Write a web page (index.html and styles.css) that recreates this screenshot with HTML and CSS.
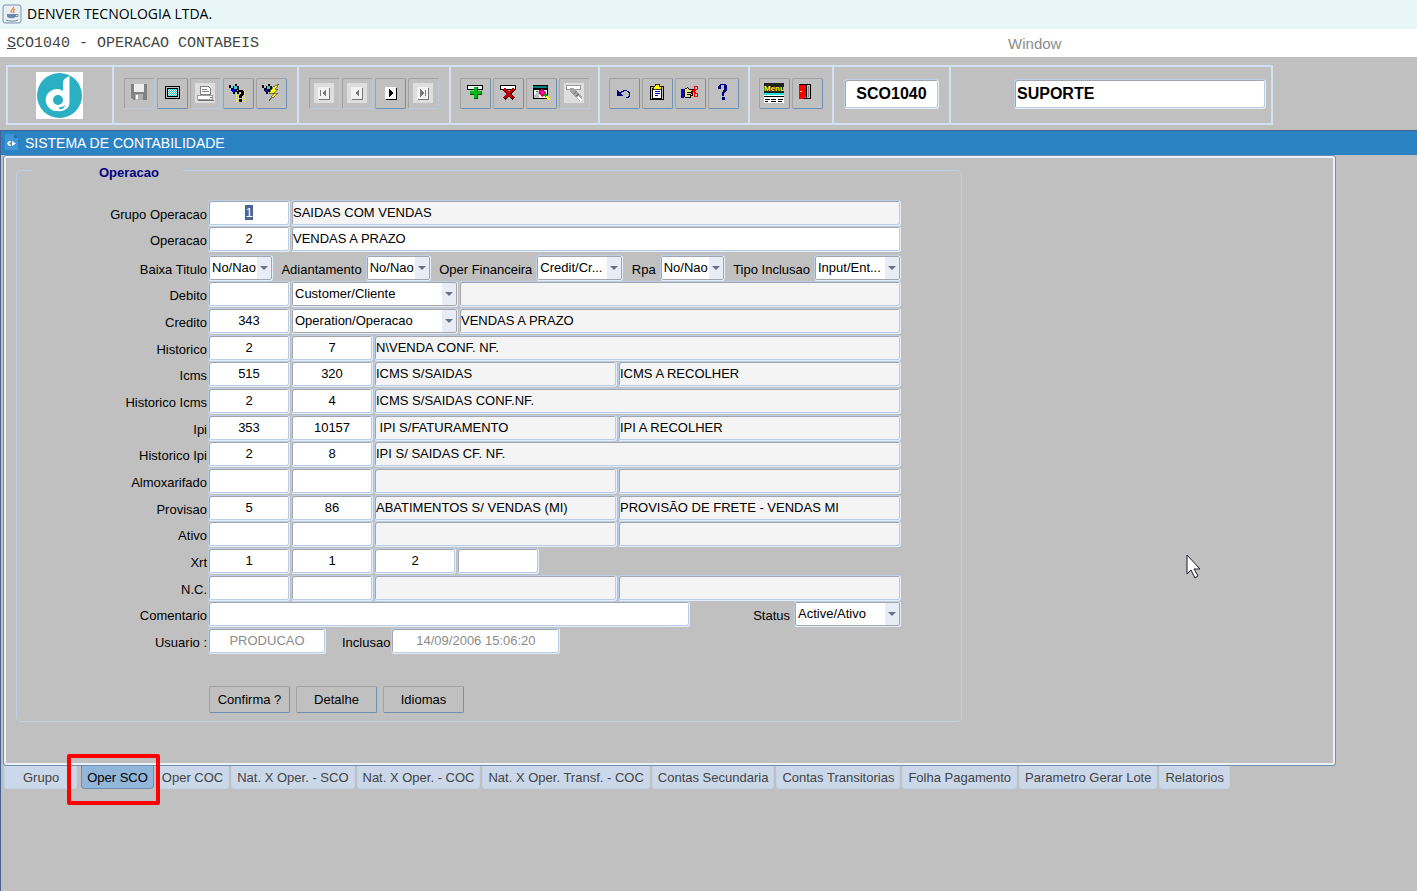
FILE: index.html
```html
<!DOCTYPE html>
<html lang="pt-BR">
<head>
    <meta charset="UTF-8">
    <meta name="viewport" content="width=device-width, initial-scale=1.0">
    <title>DENVER TECNOLOGIA LTDA.</title>
    <link rel="stylesheet" href="styles.css">
</head>
<body>
    <header class="titlebar">
        <svg class="java-icon" width="20" height="20" viewBox="0 0 20 20">
            <rect x="1" y="1" width="18" height="18" rx="2" fill="#e9eef2" stroke="#7d93a8"/>
            <path d="M11 3c2 2-4 3-1 6M13 5c-2 1-2 2-1 4" fill="none" stroke="#e8883a" stroke-width="1.3"/>
            <path d="M5 10h9v2c0 3-9 3-9 0z" fill="#6c8bab"/>
            <path d="M14 10.500h2v2h-3M4 16c3 1.500 9 1.500 12 0" fill="none" stroke="#6c8bab"/>
        </svg>
        <span>DENVER TECNOLOGIA LTDA.</span>
    </header>
    <nav class="menubar">
        <button type="button" class="menu-main"><u>S</u>CO1040 - OPERACAO CONTABEIS</button>
        <button type="button" class="menu-window" disabled>Window</button>
    </nav>

    <div class="toolbar-area">
        <div class="toolbar">
            <div class="group">
                <svg width="47" height="47" viewBox="0 0 47 47">
                    <rect width="47" height="47" fill="#fff"/>
                    <circle cx="23.500" cy="23.500" r="22.500" fill="#2bafc3"/>
                    <path d="M27 10q0-3 6.500-6v26q0 6-5 8-4 2-7 1a11 11 0 1 1 5.500-20z" fill="#fff"/>
                    <circle cx="22" cy="28" r="5" fill="#2bafc3"/>
                    <path d="M20 34q5 3 9-1-1 5-6 4 2-1-3-3z" fill="#2bafc3"/>
                </svg>
            </div>
            <div class="group">
                <button type="button" class="tool" disabled aria-label="Salvar">
                    <svg viewBox="0 0 20 20"><path d="M2 1h16v16H4l-2-2z" fill="#828282"/><path d="M5 1h10v8H5z" fill="#ededed"/><path d="M6 11h8v6H6z" fill="#b0b0b0"/><path d="M7 12h2v4H7z" fill="#fff"/></svg>
                </button>
                <button type="button" class="tool" aria-label="Tela">
                    <svg viewBox="0 0 20 20"><rect x="3.500" y="3.500" width="14" height="12" rx="1" fill="#c0c0c0" stroke="#000"/><rect x="5.500" y="5.500" width="10" height="8" fill="#fff" stroke="#000"/><path d="M6 6.500h9M6 8.500h9M6 10.500h9M6 12.500h9" stroke="#30c8c8" stroke-dasharray="1 1"/><path d="M7 7.500h8M7 9.500h8M7 11.500h8" stroke="#30c8c8" stroke-dasharray="1 1"/></svg>
                </button>
                <button type="button" class="tool" disabled aria-label="Imprimir">
                    <svg viewBox="0 0 20 20"><path d="M0 0h20v20H0z" fill="#dedede"/><path d="M5.500 3.500h8l2 2v6h-10z" fill="#fff" stroke="#808080"/><path d="M7 6.500h5M7 8.500h7" stroke="#808080"/><path d="M2.500 12.500h15v4h-15z" fill="#fff" stroke="#a0a0a0"/><path d="M3 17.500h16M15 14.500h2" stroke="#707070"/></svg>
                </button>
                <button type="button" class="tool" aria-label="Consulta">
                    <svg viewBox="0 0 20 20"><path d="M8 8.500h10M8 10.500h10M8 12.500h10M8 14.500h10M8 16.500h10M8 18.500h10" stroke="#ffff60" stroke-dasharray="1 1"/><path d="M1 2h2v1h4V1h2v2h2v4H9v2H7v2H5V8H3V5H1z" fill="#000"/><path d="M6 3h3v3H6z" fill="#20d8e8"/><path d="M4 6h3v3H4z" fill="#0000e0"/><path d="M3 3h2v2H3z" fill="#c0c0c0"/><path d="M9 8h1V7h5v1h1v4h-1v1h-1v2h-3v-3h1v-1h1V9h-2v2H9zM11 16h3v3h-3z" fill="#000"/></svg>
                </button>
                <button type="button" class="tool" aria-label="Executar consulta">
                    <svg viewBox="0 0 20 20"><path d="M1 2h2v1h4V1h2v2h2v4H9v2H7v2H5V8H3V5H1z" fill="#000"/><path d="M6 3h3v3H6z" fill="#20d8e8"/><path d="M4 6h3v3H4z" fill="#0000e0"/><path d="M3 3h2v2H3z" fill="#c0c0c0"/><path d="M18 1l-6 3-4 6h5l-5 8 9-8h-4l4-4h-3z" fill="#ff0" stroke="#444" stroke-width=".7"/></svg>
                </button>
            </div>
            <div class="group">
                <button type="button" class="tool" disabled aria-label="Primeiro">
                    <svg viewBox="0 0 20 20"><path d="M0 0h20v20H0z" fill="#dedede"/><path d="M4 4h11v12H4z" fill="#f2f2f2"/><path d="M15.500 5v11.500H5" fill="none" stroke="#777"/><path d="M6 7h1v6H6zM12 6v8l-4-4z" fill="#777"/></svg>
                </button>
                <button type="button" class="tool" disabled aria-label="Anterior">
                    <svg viewBox="0 0 20 20"><path d="M0 0h20v20H0z" fill="#dedede"/><path d="M4 4h11v12H4z" fill="#f2f2f2"/><path d="M15.500 5v11.500H5" fill="none" stroke="#777"/><path d="M12 6v8l-4-4z" fill="#777"/></svg>
                </button>
                <button type="button" class="tool" aria-label="Proximo">
                    <svg viewBox="0 0 20 20"><path d="M5 4h11v12H5z" fill="#f8f8f8"/><path d="M16.500 5v11.500H6" fill="none" stroke="#000"/><path d="M9 6v8l4-4z" fill="#000"/></svg>
                </button>
                <button type="button" class="tool" disabled aria-label="Ultimo">
                    <svg viewBox="0 0 20 20"><path d="M0 0h20v20H0z" fill="#dedede"/><path d="M4 4h11v12H4z" fill="#f2f2f2"/><path d="M15.500 5v11.500H5" fill="none" stroke="#777"/><path d="M12 7h1v6h-1zM7 6v8l4-4z" fill="#777"/></svg>
                </button>
            </div>
            <div class="group">
                <button type="button" class="tool" aria-label="Inserir">
                    <svg viewBox="0 0 20 20"><path d="M2.500 2.500h15v4h-15z" fill="#fff" stroke="#000"/><path d="M9 4h4v4h4v4h-4v4H9v-4H5V8h4z" fill="#005000"/><path d="M9 4h3v4h4v3h-4v4H9v-4H5V8h4z" fill="#00b818"/></svg>
                </button>
                <button type="button" class="tool" aria-label="Excluir">
                    <svg viewBox="0 0 20 20"><path d="M2.500 2.500h15v4h-15z" fill="#fff" stroke="#000"/><path d="M6 6l10 10M16 6L6 16" stroke="#600000" stroke-width="3.500"/><path d="M6 6l9 9M15 6l-9 9" stroke="#c80000" stroke-width="2.500"/></svg>
                </button>
                <button type="button" class="tool" aria-label="Limpar bloco">
                    <svg viewBox="0 0 20 20"><path d="M2.500 2.500h14v3h-14zM2.500 6.500h14v9h-14z" fill="#fff" stroke="#000"/><path d="M2 3h14v2H2zM5 8h8v1H5z" fill="#008080"/><path d="M3 12l5-4v7H3z" fill="#c0c0c0"/><path d="M8 7l3-1 4 4-3 4-4-3z" fill="#e00040"/><path d="M10 8h3v3h-3z" fill="#f0f"/><path d="M12 12l2-2 3 2-2 3z" fill="#00a020"/><path d="M14 14l2-2 3 4-1 2z" fill="#ff0"/></svg>
                </button>
                <button type="button" class="tool" disabled aria-label="Limpar registro">
                    <svg viewBox="0 0 20 20"><path d="M0 0h20v20H0z" fill="#dedede"/><path d="M2.500 2.500h14v4h-14z" fill="#fff" stroke="#999"/><path d="M6 5h4l8 9v4h-2L6 9z" fill="#a4a4a4"/><path d="M10 11l3-3M12 13l3-2" stroke="#777"/><path d="M14 14l4 4" stroke="#fff" stroke-width="2"/></svg>
                </button>
            </div>
            <div class="group">
                <button type="button" class="tool" aria-label="Desfazer">
                    <svg viewBox="0 0 20 20"><path d="M3 7v6h6v-1H8v-1H7v-1h1V9h2V8h3v1h1v1h1v3h-1v1h-2v1h3v-1h1V9h-1V8h-2V7H9v1H7v1H5V8H4V7z" fill="#000080"/></svg>
                </button>
                <button type="button" class="tool" aria-label="Lista">
                    <svg viewBox="0 0 20 20"><rect x="3.500" y="3.500" width="13" height="13" rx="1" fill="#c0c0c0" stroke="#000"/><path d="M5.500 5.500h9v10h-9z" fill="#fff" stroke="#000"/><path d="M8 1h4v2h2v3H6V3h2z" fill="#ff0" stroke="#000" stroke-width=".8"/><path d="M8 8.500h5M8 10.500h5M8 12.500h3" stroke="#0000c0"/></svg>
                </button>
                <button type="button" class="tool" aria-label="Editar">
                    <svg viewBox="0 0 20 20"><path d="M1 6h3v9H1z" fill="#0000e0"/><path d="M4.500 6.500l3-2 2 2h5v2h-3v2h1v2h-2v2h-5l-1-1z" fill="#e8e080" stroke="#000"/><path d="M7 9h4M7 11h4" stroke="#000"/><circle cx="16" cy="5" r="2" fill="none" stroke="#f00"/><circle cx="16" cy="12" r="2" fill="none" stroke="#f00"/><path d="M12 7l4 3M12 10l4-3" stroke="#f00"/></svg>
                </button>
                <button type="button" class="tool" aria-label="Ajuda">
                    <svg viewBox="0 0 20 20"><path d="M5 6V3l2-2h5l2 2v4l-3 3v3H9v-3l2-4V2H8v4z" fill="#000080"/><path d="M9 14h3v3H9z" fill="#000080"/></svg>
                </button>
            </div>
            <div class="group">
                <button type="button" class="tool" aria-label="Menu">
                    <svg viewBox="0 0 20 20"><path d="M0 0h20v10H0z" fill="#222"/><text x="0" y="8" class="menu-glyph">Menu</text><path d="M0 10h20v2H0z" fill="#20e0e0"/><path d="M0 12h20v8H0z" fill="#fff"/><path d="M0 13.500h20M1 16.500h5M7 16.500h5M14 16.500h5M1 18.500h3M7 18.500h5M14 18.500h4" stroke="#000"/></svg>
                </button>
                <button type="button" class="tool" aria-label="Sair">
                    <svg viewBox="0 0 20 20"><path d="M2.500 1.500h11v14h-11z" fill="#c0c0c0" stroke="#000"/><path d="M2 2h7v12l-4 2H2z" fill="#f00"/><path d="M9.500 2v13" stroke="#000"/><path d="M11.500 3v11" stroke="#888"/><path d="M3 8h2v1H3z" fill="#ff0"/></svg>
                </button>
            </div>
            <div class="group">
                <input class="field tool-code" aria-label="Programa" value="SCO1040">
            </div>
            <div class="group group-user">
                <input class="field tool-user" aria-label="Usuario" value="SUPORTE">
            </div>
        </div>
    </div>

    <main class="window">
        <div class="window-title">
            <svg width="14" height="16" viewBox="0 0 14 16">
                <path d="M0 0h9l4 4v12H0z" fill="#3f96d6"/>
                <path d="M9 0v4h4z" fill="#1f6cab"/>
                <path d="M6 7H4L2 9.500 4 12h2v-1.500H4.500v-2H6zM7 7v5l4-2.500z" fill="#fff"/>
            </svg>
            <h1>SISTEMA DE CONTABILIDADE</h1>
        </div>

        <form class="panel">
            <fieldset>
                <legend>Operacao</legend>
                <div class="rows">
                    <div class="row">
                        <label for="grupo">Grupo Operacao</label>
                        <input id="grupo" class="field code" value="1">
                        <input class="field desc" aria-label="Descricao do grupo" value="SAIDAS COM VENDAS" readonly>
                    </div>
                    <div class="row">
                        <label for="operacao">Operacao</label>
                        <input id="operacao" class="field code" value="2">
                        <input class="field text" aria-label="Descricao da operacao" value="VENDAS A PRAZO">
                    </div>
                    <div class="row">
                        <label for="baixa">Baixa Titulo</label>
                        <div class="flags">
                            <select id="baixa" class="field short"><option>No/Nao</option></select>
                            <div class="pair">
                                <label for="adiant">Adiantamento</label>
                                <select id="adiant" class="field short"><option>No/Nao</option></select>
                            </div>
                            <div class="pair">
                                <label for="financ">Oper Financeira</label>
                                <select id="financ" class="field medium"><option>Credit/Cr...</option></select>
                            </div>
                            <div class="pair">
                                <label for="rpa">Rpa</label>
                                <select id="rpa" class="field short"><option>No/Nao</option></select>
                            </div>
                            <div class="pair">
                                <label for="tipo">Tipo Inclusao</label>
                                <select id="tipo" class="field medium"><option>Input/Ent...</option></select>
                            </div>
                        </div>
                    </div>
                    <div class="row">
                        <label for="debito">Debito</label>
                        <input id="debito" class="field code">
                        <select class="field account" aria-label="Tipo debito"><option>Customer/Cliente</option></select>
                        <input class="field desc" aria-label="Conta debito" readonly>
                    </div>
                    <div class="row">
                        <label for="credito">Credito</label>
                        <input id="credito" class="field code" value="343">
                        <select class="field account" aria-label="Tipo credito"><option>Operation/Operacao</option></select>
                        <input class="field desc" aria-label="Conta credito" value="VENDAS A PRAZO" readonly>
                    </div>
                    <div class="row">
                        <label for="historico">Historico</label>
                        <input id="historico" class="field code" value="2">
                        <input class="field code" aria-label="Historico 2" value="7">
                        <input class="field desc" aria-label="Descricao historico" value="N\VENDA CONF. NF." readonly>
                    </div>
                    <div class="row">
                        <label for="icms">Icms</label>
                        <input id="icms" class="field code" value="515">
                        <input class="field code" aria-label="Icms 2" value="320">
                        <input class="field desc half" aria-label="Conta icms" value="ICMS S/SAIDAS" readonly>
                        <input class="field desc" aria-label="Contrapartida icms" value="ICMS A RECOLHER" readonly>
                    </div>
                    <div class="row">
                        <label for="hist-icms">Historico Icms</label>
                        <input id="hist-icms" class="field code" value="2">
                        <input class="field code" aria-label="Historico icms 2" value="4">
                        <input class="field desc" aria-label="Descricao historico icms" value="ICMS S/SAIDAS CONF.NF." readonly>
                    </div>
                    <div class="row">
                        <label for="ipi">Ipi</label>
                        <input id="ipi" class="field code" value="353">
                        <input class="field code" aria-label="Ipi 2" value="10157">
                        <input class="field desc half" aria-label="Conta ipi" value=" IPI S/FATURAMENTO" readonly>
                        <input class="field desc" aria-label="Contrapartida ipi" value="IPI A RECOLHER" readonly>
                    </div>
                    <div class="row">
                        <label for="hist-ipi">Historico Ipi</label>
                        <input id="hist-ipi" class="field code" value="2">
                        <input class="field code" aria-label="Historico ipi 2" value="8">
                        <input class="field desc" aria-label="Descricao historico ipi" value="IPI S/ SAIDAS CF. NF." readonly>
                    </div>
                    <div class="row">
                        <label for="almox">Almoxarifado</label>
                        <input id="almox" class="field code">
                        <input class="field code" aria-label="Almoxarifado 2">
                        <input class="field desc half" aria-label="Conta almoxarifado" readonly>
                        <input class="field desc" aria-label="Contrapartida almoxarifado" readonly>
                    </div>
                    <div class="row">
                        <label for="provisao">Provisao</label>
                        <input id="provisao" class="field code" value="5">
                        <input class="field code" aria-label="Provisao 2" value="86">
                        <input class="field desc half" aria-label="Conta provisao" value="ABATIMENTOS S/ VENDAS (MI)" readonly>
                        <input class="field desc" aria-label="Contrapartida provisao" value="PROVISÃO DE FRETE - VENDAS MI" readonly>
                    </div>
                    <div class="row">
                        <label for="ativo">Ativo</label>
                        <input id="ativo" class="field code">
                        <input class="field code" aria-label="Ativo 2">
                        <input class="field desc half" aria-label="Conta ativo" readonly>
                        <input class="field desc" aria-label="Contrapartida ativo" readonly>
                    </div>
                    <div class="row">
                        <label for="xrt">Xrt</label>
                        <input id="xrt" class="field code" value="1">
                        <input class="field code" aria-label="Xrt 2" value="1">
                        <input class="field code" aria-label="Xrt 3" value="2">
                        <input class="field code" aria-label="Xrt 4">
                    </div>
                    <div class="row">
                        <label for="nc">N.C.</label>
                        <input id="nc" class="field code">
                        <input class="field code" aria-label="N.C. 2">
                        <input class="field desc half" aria-label="Conta N.C." readonly>
                        <input class="field desc" aria-label="Contrapartida N.C." readonly>
                    </div>
                    <div class="row">
                        <label for="comentario">Comentario</label>
                        <input id="comentario" class="field text">
                        <div class="pair status">
                            <label for="status">Status</label>
                            <select id="status" class="field"><option>Active/Ativo</option></select>
                        </div>
                    </div>
                    <div class="row">
                        <label for="usuario">Usuario :</label>
                        <input id="usuario" class="field user" value="PRODUCAO" disabled>
                        <label for="inclusao" class="inclusao">Inclusao</label>
                        <input id="inclusao" class="field date" value="14/09/2006 15:06:20" disabled>
                    </div>
                </div>
                <div class="actions">
                    <button type="button">Confirma ?</button>
                    <button type="button">Detalhe</button>
                    <button type="button">Idiomas</button>
                </div>
            </fieldset>
        </form>

        <nav class="tabs">
            <button type="button" class="tab wide">Grupo</button>
            <button type="button" class="tab active">Oper SCO<span class="highlight"></span></button>
            <button type="button" class="tab">Oper COC</button>
            <button type="button" class="tab">Nat. X Oper. - SCO</button>
            <button type="button" class="tab">Nat. X Oper. - COC</button>
            <button type="button" class="tab">Nat. X Oper. Transf. - COC</button>
            <button type="button" class="tab">Contas Secundaria</button>
            <button type="button" class="tab">Contas Transitorias</button>
            <button type="button" class="tab">Folha Pagamento</button>
            <button type="button" class="tab">Parametro Gerar Lote</button>
            <button type="button" class="tab">Relatorios</button>
        </nav>
    </main>

    <svg class="cursor" width="16" height="25" viewBox="0 0 16 25">
        <path d="M1 1v19l4-4 4 8 3-2-4-7h6z" fill="#fff" stroke="#1a1a2a"/>
    </svg>

    <script>
        const grupo = document.getElementById("grupo");
        grupo.focus();
        grupo.select();
    </script>
</body>
</html>
```
FILE: styles.css
```css
* {
    box-sizing: border-box;
}
body {
    margin: 0;
    min-height: 100vh;
    display: flex;
    flex-direction: column;
    background: #c0c0c0;
    color: #000;
    font-family: "Liberation Sans", Arial, sans-serif;
    font-size: 13px;
}
button, input, select {
    margin: 0;
    font: inherit;
    color: inherit;
}

/* application title and menu */
.titlebar {
    display: flex;
    align-items: center;
    gap: 5px;
    height: 29px;
    padding: 0 0 2px 2px;
    background: #e8f6f8;
    font-family: "Open Sans", "Segoe UI", sans-serif;
    font-size: 14px;
}
.menubar {
    display: flex;
    align-items: center;
    height: 28px;
    padding: 1px 0 0 7px;
    background: #fff;
}
.menubar button {
    padding: 0;
    border: none;
    background: none;
    text-align: left;
}
.menubar .menu-main {
    width: 71%;
    color: #444;
    font-family: "Liberation Mono", "Courier New", monospace;
    font-size: 15px;
}
.menubar .menu-window {
    color: #8c8c8c;
    font-size: 15px;
}

/* toolbar */
.toolbar-area {
    padding: 8px 6px 5px;
}
.toolbar {
    display: grid;
    grid-template-columns: 106px 185px 152px 149px 150px 84px 117px 1fr;
    max-width: 1267px;
    height: 60px;
    border: 2px solid #d2e0f2;
    border-right-width: 0;
}
.group {
    display: flex;
    align-items: center;
    justify-content: center;
    gap: 2px;
    padding-bottom: 3px;
    border-right: 2px solid #d2e0f2;
}
.group:first-child {
    padding: 0 2px 0 0;
}
.tool {
    display: flex;
    align-items: center;
    justify-content: center;
    width: 31px;
    height: 31px;
    padding: 0 1px 2px 0;
    border: 1px solid;
    border-color: #a3a3a3 #6e8fb0 #6e8fb0 #a3a3a3;
    border-radius: 2px;
    background: #c0c0c0;
}
.tool:disabled {
    border-color: #a3a3a3 #b9cbe2 #b9cbe2 #a3a3a3;
}
.tool svg {
    width: 20px;
    height: 20px;
    shape-rendering: crispEdges;
}
.menu-glyph {
    font: bold 8px "Liberation Sans", Arial, sans-serif;
    fill: #ff0;
}
.group-user {
    justify-content: flex-end;
    padding-right: 5px;
}

/* fields */
.field {
    min-width: 0;
    height: 26px;
    padding: 0 1px 2px;
    border: 1px solid;
    border-color: #bccfe6 #e4edf8 #e4edf8 #bccfe6;
    border-radius: 3px;
    box-shadow: inset 1px 1px #a2a6ac, inset -1px -1px #b9cde6;
    background: #fff;
    outline: none;
}
.field::selection {
    background: #4a6494;
    color: #fff;
}
.field:disabled {
    color: #8c8c8c;
    text-align: center;
}
select.field {
    appearance: none;
    padding-left: 3px;
    box-shadow: inset 0 0 0 1px #a2a6ac;
    background: #fff url("data:image/svg+xml,%3Csvg xmlns='http://www.w3.org/2000/svg' width='15' height='24'%3E%3Cpath d='M0 1h14v22H0z' fill='%23e8edf5'/%3E%3Cpath d='M3 10h8l-4 4z' fill='%23687088'/%3E%3C/svg%3E") no-repeat right center;
}
.toolbar .field {
    height: 30px;
    padding: 1px 2px 0;
    font-size: 16px;
    font-weight: bold;
}
.tool-code {
    width: 95px;
    text-align: center;
}
.tool-user {
    width: 252px;
}

/* inner window */
.window {
    flex: 1;
    border-left: 1px solid #46628f;
}
.window-title {
    display: flex;
    align-items: center;
    gap: 6px;
    height: 25px;
    padding-left: 4px;
    border-top: 1px solid #46628f;
    background: #2c83c4;
    color: #fff;
}
.window-title svg {
    align-self: flex-start;
    margin-top: 3px;
}
.window-title h1 {
    margin: 0;
    font-size: 14px;
    font-weight: normal;
}
.panel {
    margin: 0 81px 0 2px;
    padding: 3px 10px 43px;
    border: 1px solid #6e8fb3;
    border-radius: 3px;
    box-shadow: inset 0 0 0 2px #edf2f8;
}
fieldset {
    max-width: 946px;
    margin: 0 0 0 2px;
    padding: 19px 60px 8px 0;
    border: 1px solid #bccfe6;
    border-radius: 5px;
}
legend {
    margin-left: 15px;
    padding: 6px 24px 0 67px;
    color: #000080;
    font-weight: bold;
    line-height: 16px;
}
.rows {
    display: grid;
    grid-template-rows: 26px 29px;
    grid-auto-rows: 26px 27px 27px;
}
.row {
    display: flex;
    gap: 1px;
}
.row > label:first-child {
    width: 190px;
    text-align: right;
}
label {
    padding-top: 2px;
    line-height: 26px;
    white-space: nowrap;
}
.code {
    width: 82px;
    text-align: center;
}
.text, .desc {
    flex: 1;
}
.desc {
    background: #f4f4f4;
}
.desc.half {
    flex: 0 0 243px;
}
.flags {
    display: flex;
    flex: 1;
    justify-content: space-between;
}
.pair {
    display: flex;
    gap: 4px;
}
.short {
    width: 65px;
}
.medium {
    width: 87px;
}
.account {
    width: 167px;
}
.status {
    margin-left: 62px;
}
.status .field {
    width: 107px;
}
.user {
    width: 118px;
}
.inclusao {
    margin-left: 15px;
}
.date {
    width: 169px;
}
.actions {
    display: flex;
    gap: 6px;
    margin: 31px 0 0 192px;
}
.actions button {
    width: 81px;
    height: 27px;
    padding: 0;
    border: 1px solid;
    border-color: #a3a3a3 #6e8fb0 #6e8fb0 #a3a3a3;
    border-radius: 2px;
    background: #c0c0c0;
}

/* page tabs */
.tabs {
    display: flex;
    gap: 2px;
    padding-left: 3px;
}
.tab {
    position: relative;
    height: 23px;
    padding: 0 5px;
    border: 1px solid #c4d4e8;
    border-top: none;
    border-radius: 0 0 4px 4px;
    background: #cad8ea;
    color: #444;
    white-space: nowrap;
}
.tab.wide {
    margin-right: 2px;
    padding: 0 17px 0 18px;
}
.tab.active {
    z-index: 1;
    border-color: #6e8fb3;
    background: #92b6da;
    color: #000;
}
.highlight {
    position: absolute;
    inset: -12px -7px -17px -15px;
    border: 4px solid #f00;
    border-radius: 2px;
}
.cursor {
    position: absolute;
    left: 1186px;
    top: 554px;
}
```
